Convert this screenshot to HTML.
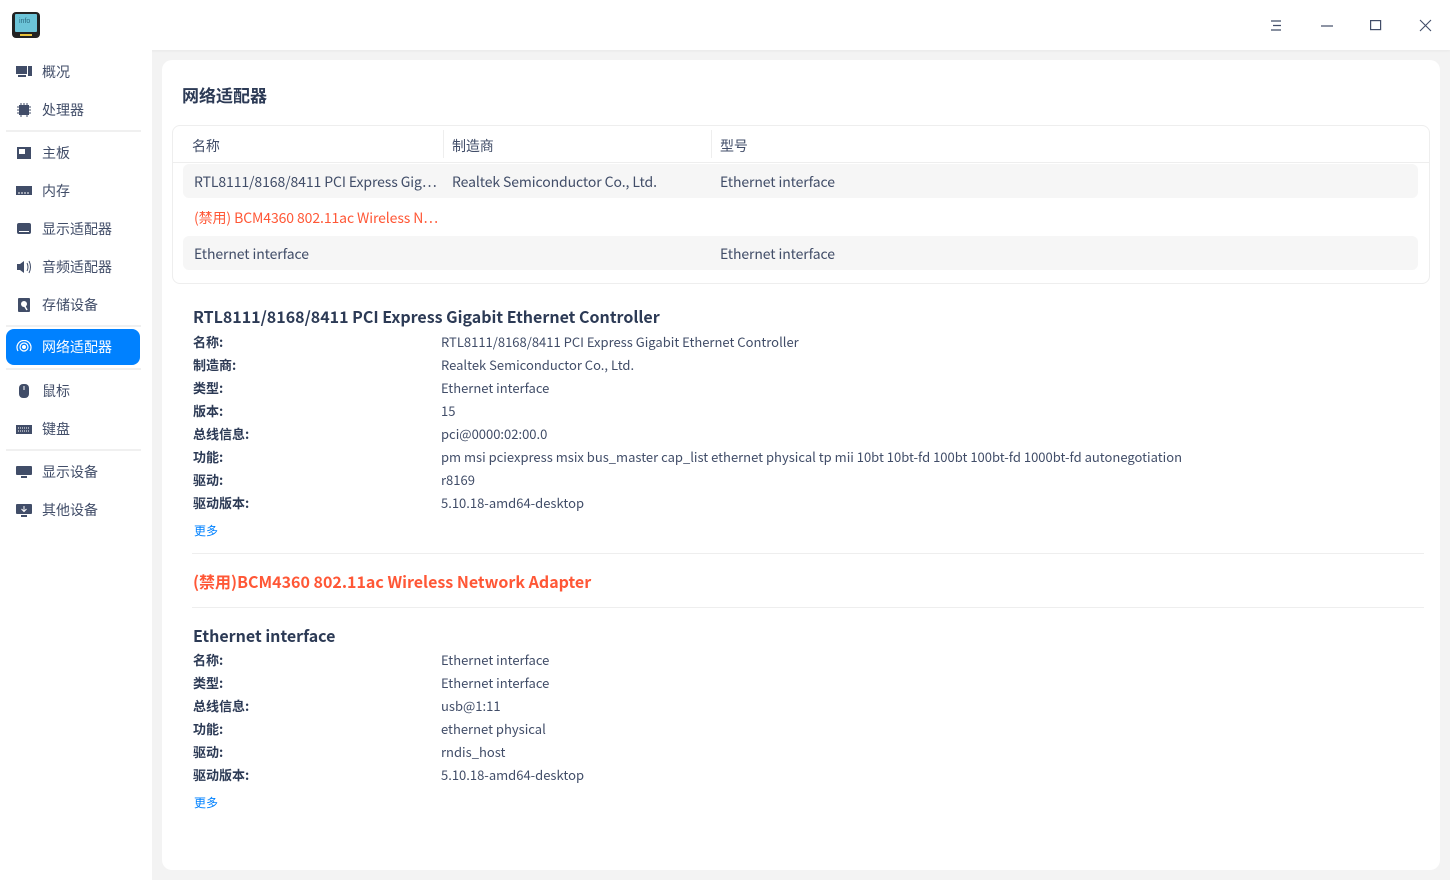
<!DOCTYPE html>
<html><head><meta charset="utf-8"><style>
*{margin:0;padding:0;box-sizing:border-box}
body{width:1450px;height:880px;background:#f3f3f3;font-family:"Noto Sans CJK SC","Liberation Sans",sans-serif;color:#414d68;position:relative;overflow:hidden}
.tb{position:absolute;left:0;top:0;width:1450px;height:50px;background:#fff;box-shadow:0 1px 3px rgba(0,0,0,.05)}
.side{position:absolute;left:0;top:50px;width:152px;height:830px;background:#fff}
.it{position:absolute;left:6px;width:134px;height:36px;font-size:14px;color:#414d68;line-height:36px;padding-left:36px}
.it svg{position:absolute;left:10px;top:11px}
.it.act{background:#0081ff;color:#fff;border-radius:8px}
.sep{position:absolute;left:6px;width:135px;height:2px;background:#f0f0f0}
.main{position:absolute;left:162px;top:60px;width:1278px;height:810px;background:#fff;border-radius:10px}
.t{position:absolute;white-space:nowrap}
.h1{font-size:17px;font-weight:bold;color:#2c3a55}
.h2{font-size:16px;font-weight:bold;color:#2c3a55}
.tbl{position:absolute;left:10px;top:65px;width:1258px;height:159px;border:1px solid #eee;border-radius:8px}
.r{position:absolute;left:10px;width:1235px;height:34px;background:#f6f6f6;border-radius:6px}
.c{font-size:14px;color:#414d68;letter-spacing:-0.1px}
.lb{font-size:13px;font-weight:bold;color:#2c3a55}
.v{font-size:13px;color:#414d68}
.more{font-size:12px;color:#0081ff}
.hr{position:absolute;left:30px;width:1232px;height:1px;background:#eee}
</style></head><body>
<div class="tb">
<svg style="position:absolute;left:11px;top:11px" width="30" height="28" viewBox="0 0 30 28"><rect x="1" y="1" width="28" height="26" rx="4" fill="#222"/><rect x="4" y="3" width="22" height="18" rx="1" fill="#6cc4d8"/><text x="8" y="12" font-size="7" fill="#2b6a80" font-family="Liberation Sans">info</text><rect x="9" y="23" width="12" height="2" fill="#e8c23a"/></svg>
<svg style="position:absolute;left:1270px;top:20px" width="12" height="11"><path d="M1 1h10M3 5.5h8M1 10h10" stroke="#414d68" stroke-width="1.2"/></svg>
<svg style="position:absolute;left:1320px;top:20px" width="14" height="11"><path d="M1 6h12" stroke="#414d68" stroke-width="1.2"/></svg>
<svg style="position:absolute;left:1370px;top:20px" width="12" height="11"><rect x=".6" y=".6" width="10" height="9" fill="none" stroke="#414d68" stroke-width="1.2"/></svg>
<svg style="position:absolute;left:1419px;top:19px" width="13" height="13"><path d="M1 1l11 11M12 1L1 12" stroke="#414d68" stroke-width="1.1"/></svg>
</div>
<div class="side">
<div class="it" style="top:4px"><svg width="16" height="14"><rect x="0" y="1" width="11" height="8" fill="#414d68"/><rect x="12" y="1" width="4" height="10" fill="#414d68"/><rect x="2" y="10" width="8" height="2" fill="#414d68"/></svg>概况</div>
<div class="it" style="top:42px"><svg width="16" height="14"><rect x="3" y="2" width="10" height="10" fill="#414d68"/><path d="M1 4h2M1 7h2M1 10h2M13 4h2M13 7h2M13 10h2M5 0v2M8 0v2M11 0v2M5 12v2M11 12v2" stroke="#414d68"/></svg>处理器</div>
<div class="sep" style="top:80px"></div>
<div class="it" style="top:85px"><svg width="16" height="14"><rect x="1" y="1" width="14" height="12" fill="#414d68"/><rect x="3" y="3" width="6" height="5" fill="#fff"/></svg>主板</div>
<div class="it" style="top:123px"><svg width="16" height="14"><rect x="0" y="2" width="16" height="9" fill="#414d68"/><path d="M3 8v2M6 8v2M9 8v2M12 8v2" stroke="#fff"/></svg>内存</div>
<div class="it" style="top:161px"><svg width="16" height="14"><rect x="1" y="1" width="14" height="11" rx="2" fill="#414d68"/><rect x="3" y="9" width="10" height="1" fill="#fff"/></svg>显示适配器</div>
<div class="it" style="top:199px"><svg width="16" height="14"><path d="M1 4h3l4-3v12l-4-3H1z" fill="#414d68"/><path d="M11 3q2 4 0 8M13 1q3 6 0 12" stroke="#414d68" fill="none"/></svg>音频适配器</div>
<div class="it" style="top:237px"><svg width="16" height="14"><rect x="2" y="0" width="12" height="14" rx="1" fill="#414d68"/><circle cx="8" cy="6" r="3" fill="#fff"/><path d="M8 7l3 5" stroke="#fff" stroke-width="1.5"/></svg>存储设备</div>
<div class="sep" style="top:275px"></div>
<div class="it act" style="top:279px"><svg width="16" height="14"><circle cx="8" cy="7" r="2" fill="#fff"/><circle cx="8" cy="7" r="4" fill="none" stroke="#fff" stroke-width="1.2"/><path d="M2 11A7 7 0 1 1 14 11" fill="none" stroke="#fff" stroke-width="1.2"/></svg>网络适配器</div>
<div class="sep" style="top:318px"></div>
<div class="it" style="top:323px"><svg width="16" height="14"><rect x="3" y="0" width="10" height="14" rx="4" fill="#414d68"/><rect x="7.5" y="2" width="1" height="4" fill="#fff"/></svg>鼠标</div>
<div class="it" style="top:361px"><svg width="16" height="14"><rect x="0" y="3" width="16" height="9" fill="#414d68"/><path d="M2 6h12M2 9h12" stroke="#fff" stroke-dasharray="1 1"/></svg>键盘</div>
<div class="sep" style="top:399px"></div>
<div class="it" style="top:404px"><svg width="16" height="14"><rect x="0" y="1" width="16" height="9" rx="1" fill="#414d68"/><rect x="5" y="11" width="6" height="2" fill="#414d68"/></svg>显示设备</div>
<div class="it" style="top:442px"><svg width="16" height="14"><rect x="0" y="1" width="16" height="10" rx="1" fill="#414d68"/><path d="M8 3v5M5.5 6l2.5 2.5 2.5-2.5" stroke="#fff" fill="none"/><rect x="5" y="12" width="6" height="2" fill="#414d68"/></svg>其他设备</div>
</div>
<div class="main">
<div class="t h1" style="left:20px;top:22px">网络适配器</div>
<div class="tbl">
<div class="t c" style="left:19px;top:10px">名称</div>
<div style="position:absolute;left:270px;top:4px;width:1px;height:28px;background:#eee"></div>
<div class="t c" style="left:279px;top:10px">制造商</div>
<div style="position:absolute;left:538px;top:4px;width:1px;height:28px;background:#eee"></div>
<div class="t c" style="left:547px;top:10px">型号</div>
<div style="position:absolute;left:0;top:36px;width:1256px;height:1px;background:#eee"></div>
<div class="r" style="top:38px"></div>
<div class="t c" style="left:21px;top:46px">RTL8111/8168/8411 PCI Express Gig⋯</div>
<div class="t c" style="left:279px;top:46px">Realtek Semiconductor Co., Ltd.</div>
<div class="t c" style="left:547px;top:46px">Ethernet interface</div>
<div class="t c" style="left:21px;top:82px;color:#ff5736">(禁用) BCM4360 802.11ac Wireless N⋯</div>
<div class="r" style="top:110px"></div>
<div class="t c" style="left:21px;top:118px">Ethernet interface</div>
<div class="t c" style="left:547px;top:118px">Ethernet interface</div>
</div>
<div class="t h2" style="left:31px;top:244px">RTL8111/8168/8411 PCI Express Gigabit Ethernet Controller</div>
<div class="t lb" style="left:31px;top:270px;line-height:23px">名称:<br>制造商:<br>类型:<br>版本:<br>总线信息:<br>功能:<br>驱动:<br>驱动版本:</div>
<div class="t v" style="left:279px;top:270px;line-height:23px">RTL8111/8168/8411 PCI Express Gigabit Ethernet Controller<br>Realtek Semiconductor Co., Ltd.<br>Ethernet interface<br>15<br>pci@0000:02:00.0<br>pm msi pciexpress msix bus_master cap_list ethernet physical tp mii 10bt 10bt-fd 100bt 100bt-fd 1000bt-fd autonegotiation<br>r8169<br>5.10.18-amd64-desktop</div>
<div class="t more" style="left:32px;top:462px">更多</div>
<div class="hr" style="top:493px"></div>
<div class="t h2" style="left:31px;top:509px;color:#ff5736">(禁用)BCM4360 802.11ac Wireless Network Adapter</div>
<div class="hr" style="top:547px"></div>
<div class="t h2" style="left:31px;top:563px">Ethernet interface</div>
<div class="t lb" style="left:31px;top:588px;line-height:23px">名称:<br>类型:<br>总线信息:<br>功能:<br>驱动:<br>驱动版本:</div>
<div class="t v" style="left:279px;top:588px;line-height:23px">Ethernet interface<br>Ethernet interface<br>usb@1:11<br>ethernet physical<br>rndis_host<br>5.10.18-amd64-desktop</div>
<div class="t more" style="left:32px;top:734px">更多</div>
</div>
</body></html>
